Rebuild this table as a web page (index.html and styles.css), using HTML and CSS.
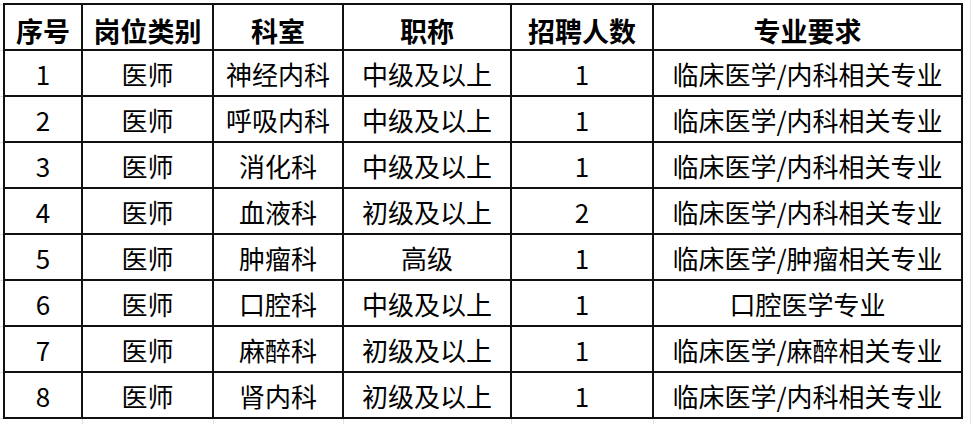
FILE: index.html
```html
<!DOCTYPE html>
<html lang="zh-CN">
<head>
<meta charset="utf-8">
<title>招聘岗位表</title>
<link rel="stylesheet" href="styles.css">
</head>
<body>
<table class="jobs">
  <colgroup>
    <col class="c-no">
    <col class="c-type">
    <col class="c-dept">
    <col class="c-title">
    <col class="c-count">
    <col class="c-major">
  </colgroup>
  <thead>
    <tr><th>序号</th><th>岗位类别</th><th>科室</th><th>职称</th><th>招聘人数</th><th>专业要求</th></tr>
  </thead>
  <tbody>
    <tr><td>1</td><td>医师</td><td>神经内科</td><td>中级及以上</td><td>1</td><td>临床医学/内科相关专业</td></tr>
    <tr><td>2</td><td>医师</td><td>呼吸内科</td><td>中级及以上</td><td>1</td><td>临床医学/内科相关专业</td></tr>
    <tr><td>3</td><td>医师</td><td>消化科</td><td>中级及以上</td><td>1</td><td>临床医学/内科相关专业</td></tr>
    <tr><td>4</td><td>医师</td><td>血液科</td><td>初级及以上</td><td>2</td><td>临床医学/内科相关专业</td></tr>
    <tr><td>5</td><td>医师</td><td>肿瘤科</td><td>高级</td><td>1</td><td>临床医学/肿瘤相关专业</td></tr>
    <tr><td>6</td><td>医师</td><td>口腔科</td><td>中级及以上</td><td>1</td><td>口腔医学专业</td></tr>
    <tr><td>7</td><td>医师</td><td>麻醉科</td><td>初级及以上</td><td>1</td><td>临床医学/麻醉相关专业</td></tr>
    <tr><td>8</td><td>医师</td><td>肾内科</td><td>初级及以上</td><td>1</td><td>临床医学/内科相关专业</td></tr>
  </tbody>
</table>
</body>
</html>
```
FILE: styles.css
```css
html, body {
  margin: 0;
  padding: 0;
}
body {
  width: 971px;
  height: 424px;
  overflow: hidden;
  background-color: #fff;
  background-image:
    linear-gradient(#e2e2e2, #e2e2e2),
    repeating-linear-gradient(to bottom, transparent 0 4px, #e2e2e2 4px 5px, transparent 5px 46px),
    linear-gradient(#e2e2e2, #e2e2e2),
    linear-gradient(#e2e2e2, #e2e2e2),
    linear-gradient(#e2e2e2, #e2e2e2),
    linear-gradient(#e2e2e2, #e2e2e2),
    linear-gradient(#e2e2e2, #e2e2e2);
  background-size:
    1px 100%,
    3px 100%,
    1px 6px,
    1px 6px,
    1px 6px,
    1px 6px,
    1px 6px;
  background-position:
    970px 0,
    0 0,
    82px 419px,
    213px 419px,
    343px 419px,
    511px 419px,
    653px 419px;
  background-repeat: no-repeat;
  font-family: "Noto Sans CJK SC", "Noto Sans", sans-serif;
  color: #000;
}
.jobs {
  margin: 3px 0 0 3px;
  border-collapse: collapse;
  table-layout: fixed;
  width: 960px;
  background: #fff;
}
.c-no { width: 78px; }
.c-type { width: 131px; }
.c-dept { width: 130px; }
.c-title { width: 168px; }
.c-count { width: 142px; }
.c-major { width: 309px; }
.jobs th,
.jobs td {
  border: 2px solid #111;
  padding: 0;
  text-align: center;
  vertical-align: middle;
  white-space: nowrap;
  line-height: 1;
}
.jobs th {
  font-size: 27px;
  font-weight: 700;
  padding-top: 6px;
  height: 38px;
}
.jobs td {
  font-size: 26px;
  font-weight: 400;
  padding-top: 2px;
  height: 42px;
}
```
